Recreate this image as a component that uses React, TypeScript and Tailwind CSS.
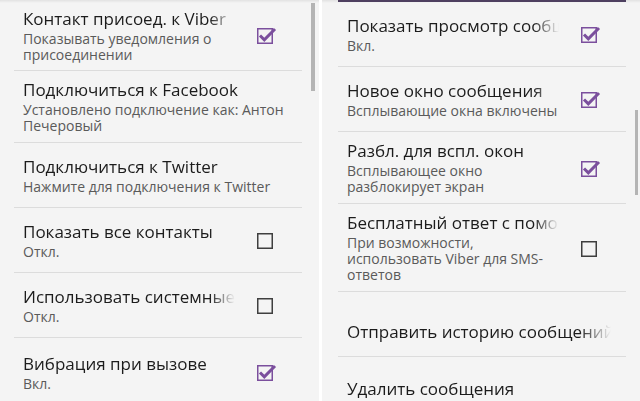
import React from 'react';

/**
 * Viber settings — two screens side by side.
 * Rows are plain preference items: title, optional subtitle lines, optional checkbox.
 */

interface Pref {
  title: string;
  sub?: string[];
  check?: boolean | null;
  h: number;
  pt?: number;
}

const leftPrefs: Pref[] = [
  { title: 'Контакт присоед. к Viber', sub: ['Показывать уведомления о', 'присоединении'], check: true, h: 71 },
  { title: 'Подключиться к Facebook', sub: ['Установлено подключение как: Антон', 'Печеровый'], h: 72 },
  { title: 'Подключиться к Twitter', sub: ['Нажмите для подключения к Twitter'], h: 65 },
  { title: 'Показать все контакты', sub: ['Откл.'], check: false, h: 65 },
  { title: 'Использовать системные шрифты', sub: ['Откл.'], check: false, h: 65 },
  { title: 'Вибрация при вызове', sub: ['Вкл.'], check: true, h: 68 },
];

const rightPrefs: Pref[] = [
  { title: 'Показать просмотр сообщений', sub: ['Вкл.'], check: true, h: 65 },
  { title: 'Новое окно сообщения', sub: ['Всплывающие окна включены'], check: true, h: 65 },
  { title: 'Разбл. для вспл. окон', sub: ['Всплывающее окно', 'разблокирует экран'], check: true, h: 72 },
  { title: 'Бесплатный ответ с помощью Viber', sub: ['При возможности,', 'использовать Viber для SMS-', 'ответов'], check: false, h: 88 },
  { title: 'Отправить историю сообщений', h: 65, pt: 14 },
  { title: 'Удалить сообщения', h: 62 },
];

function CheckBox({ checked }: { checked: boolean }) {
  return (
    <svg width="20" height="20" viewBox="0 0 20 20" className="block shrink-0">
      <rect
        x="0.75"
        y="3.75"
        width="14.5"
        height="14.5"
        fill="none"
        stroke={checked ? '#7b4f9d' : '#3f3f3f'}
        strokeWidth="1.5"
      />
      {checked && (
        <path d="M3 10.5 L7.3 14.8 L18 4" fill="none" stroke="#7b4f9d" strokeWidth="3" strokeLinejoin="miter" />
      )}
    </svg>
  );
}

const fade = '[mask-image:linear-gradient(to_right,black_88%,transparent)]';

function PrefRow({ pref, last }: { pref: Pref; last: boolean }) {
  const hasBox = pref.check !== undefined && pref.check !== null;
  return (
    <div
      className={`flex items-center pl-[9px] ${last ? '' : 'border-b border-[#dcdcdc]'}`}
      style={{ height: pref.h, paddingTop: pref.pt ?? 0 }}
    >
      <div className={hasBox ? 'w-[212px]' : 'w-[264px]'}>
        <div className={`whitespace-nowrap overflow-hidden text-[17px] leading-[21px] text-[#1c1c1c] ${fade}`}>
          {pref.title}
        </div>
        {pref.sub && (
          <div className="mt-[2px] text-[14px] leading-[16px] text-[#5a5a5a]">
            {pref.sub.map((line) => (
              <div key={line} className="whitespace-nowrap">{line}</div>
            ))}
          </div>
        )}
      </div>
      {hasBox && (
        <div className="ml-[22px]">
          <CheckBox checked={!!pref.check} />
        </div>
      )}
    </div>
  );
}

export default function App() {
  return (
    <div
      className="w-[640px] h-[401px] flex overflow-hidden bg-white"
      style={{ fontFamily: '"Open Sans", "Noto Sans", sans-serif' }}
    >
      {/* left screen */}
      <div className="relative w-[319px] h-full bg-[#f4f4f4] overflow-hidden">
        <div className="absolute inset-x-0 top-0 h-[3px] bg-gradient-to-b from-[#e2e2e2] to-transparent" />
        <div className="ml-[14px] w-[288px]">
          {leftPrefs.map((p, i) => (
            <PrefRow key={p.title} pref={p} last={i === leftPrefs.length - 1} />
          ))}
        </div>
        <div className="absolute left-[311px] top-[3px] w-[4px] h-[88px] bg-[#b4b4b4]" />
      </div>

      {/* right screen */}
      <div className="relative ml-[3px] flex-1 h-full bg-[#f4f4f4] overflow-hidden">
        <div className="absolute inset-x-0 top-0 h-[3px] bg-gradient-to-b from-[#e2e2e2] to-transparent" />
        <div className="relative ml-[16px] w-[288px]">
          <div className="h-[2px] bg-[#4e4060]" />
          {rightPrefs.map((p, i) => (
            <PrefRow key={p.title} pref={p} last={i === rightPrefs.length - 1} />
          ))}
        </div>
        <div className="absolute left-[313px] top-[110px] w-[3px] h-[85px] bg-[#b4b4b4]" />
      </div>
    </div>
  );
}
